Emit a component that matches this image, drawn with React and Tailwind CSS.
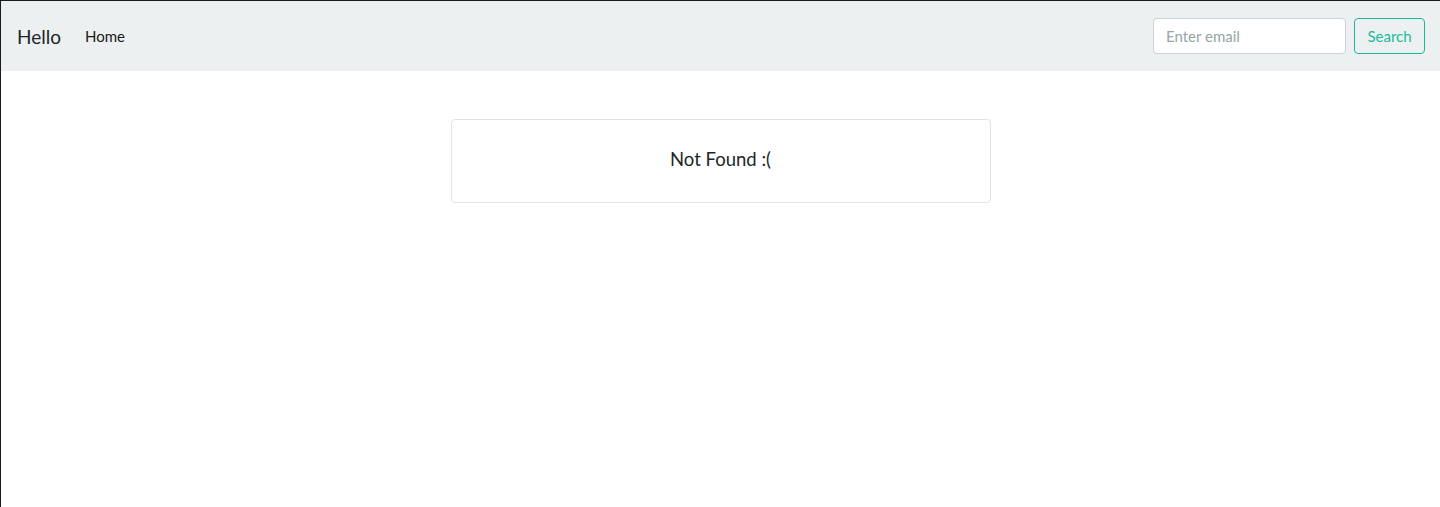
export default function App() {
  return (
    <div className="min-h-[507px] border-l border-t border-[#1a1a1a] bg-white text-[#212529]" style={{ fontFamily: 'Lato, "Liberation Sans", sans-serif' }}>
      <nav className="flex h-[70px] items-center justify-between bg-[#ecf0f1] pl-4 pr-[15px]">
        <div className="flex items-center">
          <span className="mr-4 text-[19px] leading-none text-[#212529]">Hello</span>
          <a className="px-2 pt-[1px] text-[15px] text-[#1a1a1a]">Home</a>
        </div>
        <form className="-mt-[1px] flex items-center">
          <input
            type="text"
            placeholder="Enter email"
            className="h-[36px] w-[193px] rounded border border-[#ced4da] bg-white px-3 pt-[1px] text-[15px] placeholder:text-[#95a5a6] focus:outline-none"
          />
          <button type="button" className="ml-2 h-[36px] w-[71px] rounded border border-[#18bc9c] pt-[2px] text-[15px] text-[#18bc9c]">
            Search
          </button>
        </form>
      </nav>
      <div className="flex justify-center pt-[48px]">
        <div className="flex h-[84px] w-[540px] items-center justify-center rounded border border-[#dfe3e6]">
          <span className="-mt-[2px] text-[18.5px]">Not Found :(</span>
        </div>
      </div>
    </div>
  )
}
